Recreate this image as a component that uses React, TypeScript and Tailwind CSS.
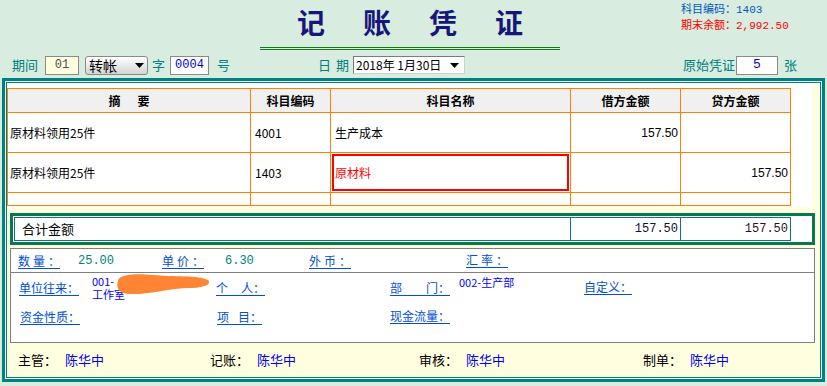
import React from "react";

const Arrow = () => (
  <svg width="9" height="5" viewBox="0 0 9 5">
    <path d="M0 0 H9 L4.5 5 Z" fill="#000" />
  </svg>
);

// underlined label, parts spread over a fixed width like the old form
const ULabel = ({ parts, className = "" }: { parts: string[]; className?: string }) => (
  <span
    className={`inline-flex justify-between border-b border-[#0050d0] leading-[14px] text-[#0050d0] ${className}`}
  >
    {parts.map((p, i) => (
      <span key={i}>{p}</span>
    ))}
  </span>
);

const rows = [
  { memo: "原材料领用25件", code: "4001", name: "生产成本", debit: "157.50", credit: "", active: false },
  { memo: "原材料领用25件", code: "1403", name: "原材料", debit: "", credit: "157.50", active: true },
];

const signers = [
  { label: "主管：", name: "陈华中", w: "w-[145px]" },
  { label: "记账：", name: "陈华中", w: "w-[162px]" },
  { label: "审核：", name: "陈华中", w: "w-[177px]" },
  { label: "制单：", name: "陈华中", w: "w-[100px]" },
];

export default function App() {
  return (
    <div className="w-[827px] h-[386px] overflow-hidden bg-[#d8ecdf] font-['Noto_Sans_CJK_SC',sans-serif] text-[12px] text-black">
      {/* 标题 */}
      <div className="flex h-[52px]">
        <div className="w-[260px]" />
        <div className="w-[300px] flex flex-col">
          <div className="flex justify-center gap-[38px] pt-[7px] h-[38px] text-[28px] leading-[30px] font-bold text-[#16167a]">
            <span>记</span>
            <span>账</span>
            <span>凭</span>
            <span>证</span>
          </div>
          <div className="mt-[9px] h-[3px] border-y border-[#127a12]" />
        </div>
        <div className="flex-1 pl-[121px] pt-[1px] text-[11px] leading-[14px]">
          <div className="text-[#0058c0]">
            科目编码：<span className="font-['Liberation_Mono',monospace]">1403</span>
          </div>
          <div className="text-[#ff0000]">
            期末余额：<span className="font-['Liberation_Mono',monospace]">2,992.50</span>
          </div>
        </div>
      </div>

      {/* 凭证字号 */}
      <div className="flex items-center h-[26px] pl-[12px] text-[13px] text-[#008080]">
        <span className="w-[33px]">期间</span>
        <div className="w-[34px] h-[19px] flex items-center justify-center bg-[#ffffe0] border border-[#8a8a8a] font-['Liberation_Mono',monospace] text-[12px] text-[#505050]">
          01
        </div>
        <div className="ml-[6px] w-[63px] h-[19px] flex items-center justify-between pl-[3px] pr-[3px] rounded-[3px] border border-[#8a8a8a] bg-gradient-to-b from-white to-[#d4d4d4] text-[14px] text-black">
          <span className="leading-none">转帐</span>
          <Arrow />
        </div>
        <span className="ml-[4px] w-[18px]">字</span>
        <div className="w-[39px] h-[19px] flex items-center justify-center bg-white border border-[#8a8a8a] font-['Liberation_Mono',monospace] text-[12px] text-[#0000e0]">
          0004
        </div>
        <span className="ml-[8px] w-[101px]">号</span>
        <span className="w-[35px] pr-[4px] flex justify-between">
          <span>日</span>
          <span>期</span>
        </span>
        <div className="w-[112px] h-[18px] flex items-center justify-between pl-[2px] pr-[5px] bg-white border border-[#7a7a7a] border-r-[#d0d0d0] border-b-[#d0d0d0] text-[12px] text-black">
          <span className="leading-none">2018年 1月30日</span>
          <Arrow />
        </div>
        <span className="ml-[218px] w-[53px]">原始凭证</span>
        <div className="w-[42px] h-[19px] flex items-center justify-center bg-white border border-[#8a8a8a] font-['Liberation_Mono',monospace] text-[13px] text-[#0000e0]">
          5
        </div>
        <span className="ml-[6px]">张</span>
      </div>

      {/* 主面板 */}
      <div className="ml-[2px] w-[823px] h-[304px] border-[3px] border-[#008080] bg-[#e8f6f4] p-px">
        <div className="h-full border border-[#008080] bg-[#ffffe0] flex flex-col">
          {/* 分录表 */}
          <div className="w-[805px] h-[124px] pt-[5px] bg-white">
            <div className="grid grid-cols-[243px_80px_240px_110px_110px] w-[784px] border-l border-t border-[#ff8000]">
              <div className="h-[24px] flex items-center justify-center gap-[17px] bg-[#f0f0f0] border-r border-b border-[#ff8000] font-bold">
                <span>摘</span>
                <span>要</span>
              </div>
              <div className="h-[24px] flex items-center justify-center bg-[#f0f0f0] border-r border-b border-[#ff8000] font-bold">
                科目编码
              </div>
              <div className="h-[24px] flex items-center justify-center bg-[#f0f0f0] border-r border-b border-[#ff8000] font-bold">
                科目名称
              </div>
              <div className="h-[24px] flex items-center justify-center bg-[#f0f0f0] border-r border-b border-[#ff8000] font-bold">
                借方金额
              </div>
              <div className="h-[24px] flex items-center justify-center bg-[#f0f0f0] border-r border-b border-[#ff8000] font-bold">
                贷方金额
              </div>

              {rows.map((r, i) => (
                <React.Fragment key={i}>
                  <div className="h-[40px] flex items-center pl-[2px] border-r border-b border-[#ff8000]">{r.memo}</div>
                  <div className="h-[40px] flex items-center pl-[4px] border-r border-b border-[#ff8000]">{r.code}</div>
                  <div className="h-[40px] border-r border-b border-[#ff8000]">
                    {r.active ? (
                      <div className="m-px h-[37px] flex items-center pl-px border-2 border-[#ff0000] text-[#ff0000]">
                        {r.name}
                      </div>
                    ) : (
                      <div className="h-full flex items-center pl-[4px]">{r.name}</div>
                    )}
                  </div>
                  <div className="h-[40px] flex items-center justify-end pr-[2px] border-r border-b border-[#ff8000] font-['Liberation_Sans',sans-serif]">
                    {r.debit}
                  </div>
                  <div className="h-[40px] flex items-center justify-end pr-[2px] border-r border-b border-[#ff8000] font-['Liberation_Sans',sans-serif]">
                    {r.credit}
                  </div>
                </React.Fragment>
              ))}
              <div className="h-[13px] border-r border-b border-[#ff8000]" />
              <div className="h-[13px] border-r border-b border-[#ff8000]" />
              <div className="h-[13px] border-r border-b border-[#ff8000]" />
              <div className="h-[13px] border-r border-b border-[#ff8000]" />
              <div className="h-[13px] border-r border-b border-[#ff8000]" />
            </div>
          </div>

          {/* 合计 */}
          <div className="mt-[6px] ml-[3px] w-[805px] border-[3px] border-[#067a4c] p-px bg-white">
            <div className="grid grid-cols-[556px_110px_110px] w-[777px] border-l border-t border-[#0a7878]">
              <div className="h-[23px] flex items-center pl-[7px] border-r border-b border-[#0a7878] text-[13px]">
                合计金额
              </div>
              <div className="h-[23px] flex items-center justify-end pr-[2px] border-r border-b border-[#0a7878] font-['Liberation_Mono',monospace] text-[12px] text-[#101030]">
                157.50
              </div>
              <div className="h-[23px] flex items-center justify-end pr-[2px] border-r border-b border-[#0a7878] font-['Liberation_Mono',monospace] text-[12px] text-[#301020]">
                157.50
              </div>
            </div>
          </div>

          {/* 辅助项 */}
          <div className="relative mt-[3px] ml-[3px] w-[805px] h-[95px] border border-[#808080] bg-white">
            <div className="flex items-center h-[24px] pl-[7px] border-b border-[#808080]">
              <div className="w-[60px]">
                <ULabel parts={["数", "量", "："]} className="w-[42px]" />
              </div>
              <div className="w-[84px] font-['Liberation_Mono',monospace] text-[12px] text-[#008080]">25.00</div>
              <div className="w-[63px]">
                <ULabel parts={["单", "价", "："]} className="w-[42px]" />
              </div>
              <div className="w-[84px] font-['Liberation_Mono',monospace] text-[12px] text-[#008080]">6.30</div>
              <div className="w-[157px]">
                <ULabel parts={["外", "币", "："]} className="w-[42px]" />
              </div>
              <ULabel parts={["汇", "率", "："]} className="w-[42px]" />
            </div>

            <div className="flex items-center h-[29px] pl-[8px]">
              <div className="w-[73px]">
                <ULabel parts={["单位往来："]} />
              </div>
              <div className="w-[124px] flex flex-col text-[11px] leading-[13px] text-[#0000ff]">
                <span>001-</span>
                <span>工作室</span>
              </div>
              <div className="w-[174px]">
                <ULabel parts={["个", "人："]} className="w-[49px]" />
              </div>
              <div className="w-[69px]">
                <ULabel parts={["部", "门："]} className="w-[60px]" />
              </div>
              <div className="w-[125px] self-start pt-[3px] text-[11px] leading-[12px] text-[#0000ff]">002-生产部</div>
              <ULabel parts={["自定义："]} />
            </div>

            <div className="flex items-center h-[29px] pl-[9px]">
              <div className="w-[197px]">
                <ULabel parts={["资金性质："]} />
              </div>
              <div className="w-[173px]">
                <ULabel parts={["项", "目："]} className="w-[45px]" />
              </div>
              <ULabel parts={["现金流量："]} />
            </div>

            {/* 涂抹遮挡 */}
            <svg className="absolute left-[104px] top-[23px]" width="96" height="24" viewBox="0 0 96 24">
              <path
                d="M3 9 C3 3 18 1 38 3 C58 5 84 3 93 8 C97 12 90 16 72 16 C52 17 32 23 13 22 C3 21 1 15 3 9 Z"
                fill="#ff8434"
              />
            </svg>
          </div>

          {/* 签字 */}
          <div className="flex-1 flex items-center pl-[11px] text-[13px]">
            {signers.map((s, i) => (
              <React.Fragment key={i}>
                <span className="w-[47px]">{s.label}</span>
                <span className={`${s.w} text-[#0000ff]`}>{s.name}</span>
              </React.Fragment>
            ))}
          </div>
        </div>
      </div>
    </div>
  );
}
